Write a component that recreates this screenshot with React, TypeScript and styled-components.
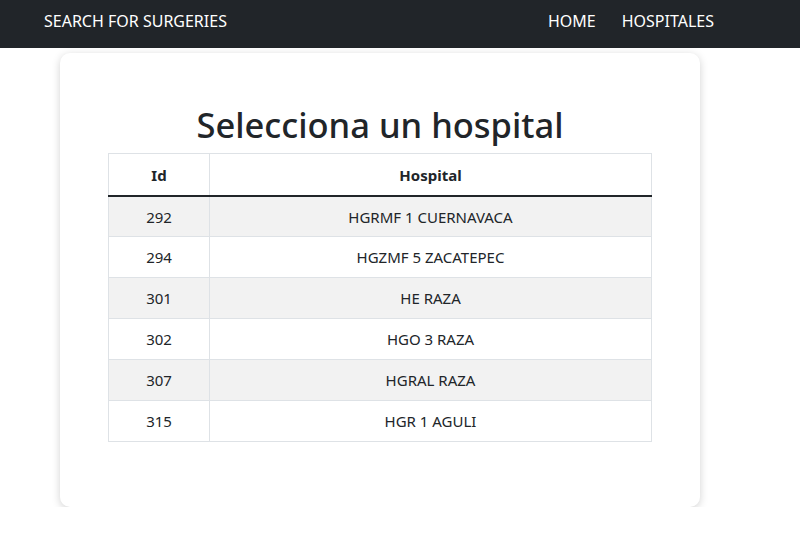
import React from 'react';
import styled, { createGlobalStyle } from 'styled-components';

const GlobalStyle = createGlobalStyle`
  body {
    margin: 0;
    font-family: "Noto Sans", "Open Sans", sans-serif;
    color: #212529;
    background: #fff;
  }
  * { box-sizing: border-box; }
`;

const NavBar = styled.nav`
  height: 48px;
  background: #212529;
  display: flex;
  align-items: center;
  padding: 0 86px 6px 44px;
`;

const Brand = styled.a`
  color: #fff;
  font-size: 16px;
  text-decoration: none;
  flex: 1;
`;

const NavLinks = styled.div`
  display: flex;
  gap: 26px;
`;

const NavLink = styled.a`
  color: #fff;
  font-size: 16px;
  text-decoration: none;
`;

const Card = styled.main`
  width: 640px;
  margin: 5px 0 0 60px;
  padding: 51px 48px 65px;
  background: #fff;
  border-radius: 10px;
  box-shadow: 0 2px 8px rgba(0, 0, 0, 0.18);
`;

const Title = styled.h1`
  margin: 0 0 8px;
  text-align: center;
  font-size: 34.5px;
  font-weight: 500;
  line-height: 1.2;
`;

const Table = styled.table`
  width: 100%;
  border-collapse: collapse;
  font-size: 15px;
`;

const HeadCell = styled.th<{ $w?: number }>`
  width: ${p => (p.$w ? `${p.$w}px` : 'auto')};
  height: 42px;
  border: 1px solid #dee2e6;
  border-bottom: 2px solid #212529;
  font-weight: 700;
  text-align: center;
`;

const Row = styled.tr<{ $striped: boolean }>`
  background: ${p => (p.$striped ? '#f2f2f2' : '#fff')};
`;

const Cell = styled.td`
  height: 41px;
  border: 1px solid #dee2e6;
  text-align: center;
`;

const hospitals = [
  { id: 292, name: 'HGRMF 1 CUERNAVACA' },
  { id: 294, name: 'HGZMF 5 ZACATEPEC' },
  { id: 301, name: 'HE RAZA' },
  { id: 302, name: 'HGO 3 RAZA' },
  { id: 307, name: 'HGRAL RAZA' },
  { id: 315, name: 'HGR 1 AGULI' },
];

const App: React.FC = () => (
  <>
    <GlobalStyle />
    <NavBar>
      <Brand href="#">SEARCH FOR SURGERIES</Brand>
      <NavLinks>
        <NavLink href="#">HOME</NavLink>
        <NavLink href="#">HOSPITALES</NavLink>
      </NavLinks>
    </NavBar>
    <Card>
      <Title>Selecciona un hospital</Title>
      <Table>
        <thead>
          <tr>
            <HeadCell $w={101}>Id</HeadCell>
            <HeadCell>Hospital</HeadCell>
          </tr>
        </thead>
        <tbody>
          {hospitals.map((h, i) => (
            <Row key={h.id} $striped={i % 2 === 0}>
              <Cell>{h.id}</Cell>
              <Cell>{h.name}</Cell>
            </Row>
          ))}
        </tbody>
      </Table>
    </Card>
  </>
);

export default App;
